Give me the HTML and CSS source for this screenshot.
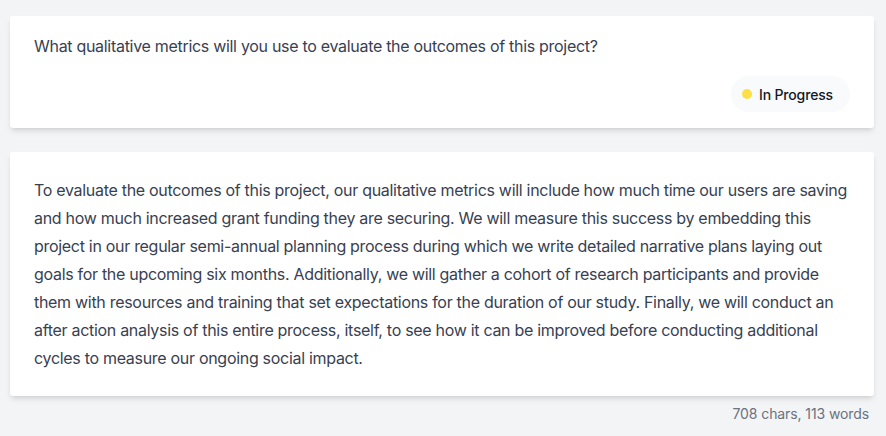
FILE: index.html
```html
<!DOCTYPE html>
<html lang="en">
<head>
    <meta charset="UTF-8">
    <meta name="viewport" content="width=device-width, initial-scale=1.0">
    <title>Project Question</title>
    <link rel="stylesheet" href="styles.css">
</head>
<body>
    <div class="page">
        <div class="card question-card">
            <p class="question">What qualitative metrics will you use to evaluate the outcomes of this project?</p>
            <div class="status-row">
                <span class="status"><span class="status-dot"></span>In Progress</span>
            </div>
        </div>

        <div class="card answer-card">
            <p class="answer">To evaluate the outcomes of this project, our qualitative metrics will include how much time our users are saving and how much increased grant funding they are securing. We will measure this success by embedding this project in our regular semi-annual planning process during which we write detailed narrative plans laying out goals for the upcoming six months. Additionally, we will gather a cohort of research participants and provide them with resources and training that set expectations for the duration of our study. Finally, we will conduct an after action analysis of this entire process, itself, to see how it can be improved before conducting additional cycles to measure our ongoing social impact.</p>
        </div>
        <div class="counter">708 chars, 113 words</div>
    </div>
</body>
</html>
```

FILE: styles.css
```css
body {
    font-family: Inter, 'Noto Sans', sans-serif;
    background-color: #f3f4f6;
    margin: 0;
    padding: 0;
}

.page {
    padding: 16px 12px 0 10px;
    display: flex;
    flex-direction: column;
}

.card {
    background-color: #fff;
    border-radius: 3px;
    box-shadow: 0 4px 6px -1px rgba(0, 0, 0, 0.1), 0 2px 4px -2px rgba(0, 0, 0, 0.1);
}

.question-card {
    padding: 16px 24px;
    display: flex;
    flex-direction: column;
    gap: 16px;
}

.question {
    margin: 0;
    font-size: 16px;
    line-height: 28px;
    letter-spacing: -0.3px;
    color: #374151;
}

.status-row {
    display: flex;
    justify-content: flex-end;
}

.status {
    display: flex;
    align-items: center;
    gap: 7px;
    height: 36px;
    padding: 0 17px 0 11px;
    border-radius: 18px;
    background-color: #f9fafb;
    font-size: 14px;
    font-weight: 500;
    letter-spacing: -0.15px;
    color: #111827;
}

.status-dot {
    width: 10px;
    height: 10px;
    border-radius: 50%;
    background-color: #fde047;
}

.answer-card {
    margin-top: 24px;
    padding: 24px;
}

.answer {
    margin: 0;
    font-size: 16px;
    line-height: 28px;
    letter-spacing: -0.3px;
    color: #374151;
}

.counter {
    margin-top: 8px;
    padding-right: 5px;
    text-align: right;
    font-size: 14px;
    line-height: 20px;
    letter-spacing: -0.1px;
    color: #6b7280;
}
```
